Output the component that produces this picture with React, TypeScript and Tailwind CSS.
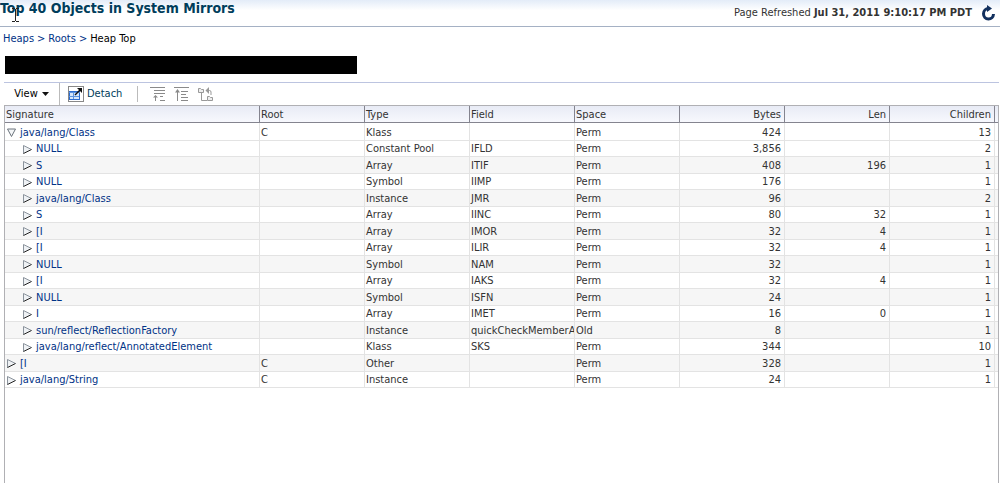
import React, { useState } from 'react';

type Row = {
  signature: string;
  depth: number;
  open?: boolean;
  root?: string;
  type: string;
  field?: string;
  space: string;
  bytes: string;
  len?: string;
  children: string;
};

const rows: Row[] = [
  { signature: 'java/lang/Class', depth: 0, open: true, root: 'C', type: 'Klass', space: 'Perm', bytes: '424', children: '13' },
  { signature: 'NULL', depth: 1, type: 'Constant Pool', field: 'IFLD', space: 'Perm', bytes: '3,856', children: '2' },
  { signature: 'S', depth: 1, type: 'Array', field: 'ITIF', space: 'Perm', bytes: '408', len: '196', children: '1' },
  { signature: 'NULL', depth: 1, type: 'Symbol', field: 'IIMP', space: 'Perm', bytes: '176', children: '1' },
  { signature: 'java/lang/Class', depth: 1, type: 'Instance', field: 'JMR', space: 'Perm', bytes: '96', children: '2' },
  { signature: 'S', depth: 1, type: 'Array', field: 'IINC', space: 'Perm', bytes: '80', len: '32', children: '1' },
  { signature: '[I', depth: 1, type: 'Array', field: 'IMOR', space: 'Perm', bytes: '32', len: '4', children: '1' },
  { signature: '[I', depth: 1, type: 'Array', field: 'ILIR', space: 'Perm', bytes: '32', len: '4', children: '1' },
  { signature: 'NULL', depth: 1, type: 'Symbol', field: 'NAM', space: 'Perm', bytes: '32', children: '1' },
  { signature: '[I', depth: 1, type: 'Array', field: 'IAKS', space: 'Perm', bytes: '32', len: '4', children: '1' },
  { signature: 'NULL', depth: 1, type: 'Symbol', field: 'ISFN', space: 'Perm', bytes: '24', children: '1' },
  { signature: 'I', depth: 1, type: 'Array', field: 'IMET', space: 'Perm', bytes: '16', len: '0', children: '1' },
  { signature: 'sun/reflect/ReflectionFactory', depth: 1, type: 'Instance', field: 'quickCheckMemberAc', space: 'Old', bytes: '8', children: '1' },
  { signature: 'java/lang/reflect/AnnotatedElement', depth: 1, type: 'Klass', field: 'SKS', space: 'Perm', bytes: '344', children: '10' },
  { signature: '[I', depth: 0, root: 'C', type: 'Other', space: 'Perm', bytes: '328', children: '1' },
  { signature: 'java/lang/String', depth: 0, root: 'C', type: 'Instance', space: 'Perm', bytes: '24', children: '1' },
];

const columns = [
  { label: 'Signature' },
  { label: 'Root' },
  { label: 'Type' },
  { label: 'Field' },
  { label: 'Space' },
  { label: 'Bytes', right: true },
  { label: 'Len', right: true },
  { label: 'Children', right: true },
];

const Triangle = ({ open }: { open: boolean }) =>
  open ? (
    <svg width="9" height="9" viewBox="0 0 9 9" fill="#f4f6f8">
      <path d="M.5 1h8L4.500 8.500z" stroke="#6b737c" />
    </svg>
  ) : (
    <svg width="9" height="9" viewBox="0 0 9 9" fill="#eef1f4">
      <path d="M.5 8.500V.5L8.500 4.500" stroke="#8b939c" />
      <path d="M.5 8.500L8.500 4.500" stroke="#222" />
    </svg>
  );

const DetachIcon = () => (
  <svg width="16" height="16" viewBox="0 0 16 16">
    <rect x=".5" y=".5" width="15" height="15" fill="none" stroke="#111" strokeDasharray="1 1" />
    <rect x="1.500" y="5.500" width="10" height="8" fill="#d6e6fb" stroke="#2b6bd0" />
    <path d="M1 6.500h11M5.500 7v6M1 10.500h10" stroke="#5c93e0" />
    <path d="M7 9l6-6" stroke="#111" strokeWidth="1.500" />
    <path d="M9 2h5v5z" fill="#111" />
  </svg>
);

const GoUpIcon = () => (
  <svg width="15" height="15" viewBox="0 0 15 15" fill="none" stroke="#8a8a8a">
    <path d="M0 .5h15M4 3.500h11M4 6.500h11M10 9.500h3M10 13.500h5M5.500 14V9" />
    <path d="M3 10.500h5L5.500 8z" fill="#8a8a8a" stroke="none" />
  </svg>
);

const GoTopIcon = () => (
  <svg width="15" height="15" viewBox="0 0 15 15" fill="none" stroke="#8a8a8a">
    <path d="M0 .5h15M7 4.500h7M7 7.500h5M7 10.500h7M7 13.500h7M3.500 14V4" />
    <path d="M1 5.500h5L3.500 2z" fill="#8a8a8a" stroke="none" />
  </svg>
);

const ShowAsTopIcon = () => (
  <svg width="15" height="15" viewBox="0 0 15 15" fill="none" stroke="#999">
    <path d="M.5 1.500h2l1 1h2v3h-5zM9.500 9.500h2l1 1h2v3h-5z" fill="#eee" />
    <path d="M3.500 6v7.500H9M8 3.500h3.500q1.500 0 1.500 1.500v3" />
    <path d="M11 0v7L7.500 3.500z" fill="#999" stroke="none" />
  </svg>
);

const App: React.FC = () => {
  const [selected, setSelected] = useState<number | null>(null);

  return (
    <div className="min-h-screen flex flex-col bg-white text-[#333] text-[11px] leading-[16px] font-['DejaVu_Sans_Condensed','DejaVu_Sans',sans-serif]">
      {/* Page header */}
      <header className="relative mr-1 h-[27px] flex items-start justify-between border-b border-[#a5b1c4] bg-linear-to-b from-[#e3ecf8] to-white to-40%">
        <h1 className="text-[14px] font-bold text-[#003d5b]">Top 40 Objects in System Mirrors</h1>
        <div className="flex items-center gap-2 pt-[5px] pr-1">
          <p>
            Page Refreshed <b>Jul 31, 2011 9:10:17 PM PDT</b>
          </p>
          <button aria-label="Refresh">
            <svg width="16" height="16" viewBox="0 0 16 16" fill="none" stroke="#12305e" strokeWidth="3">
              <path d="M8.500 3.500A5 5.250 0 1 0 13.500 9" />
              <path d="M7 0l5 3.500L7 7z" fill="#12305e" stroke="none" />
            </svg>
          </button>
        </div>
        {/* Text cursor */}
        <svg className="absolute left-3 top-2" width="7" height="14" viewBox="0 0 7 14" stroke="#222" fill="none">
          <path d="M0 .5h3M4 .5h3M3.500 1v12M0 13.500h3M4 13.500h3" />
        </svg>
      </header>

      <nav aria-label="Breadcrumb" className="flex gap-[3px] pl-[3px] pt-1 text-[#003286]">
        <a href="#heaps">Heaps</a>
        <span>&gt;</span>
        <a href="#roots">Roots</a>
        <span>&gt;</span>
        <span className="text-black">Heap Top</span>
      </nav>

      <div className="ml-[5px] mt-[9px] h-[18px] w-[352px] bg-black" />

      <main className="ml-1 mr-[5px] mt-2 flex-1 flex flex-col">
        {/* Toolbar */}
        <div className="flex h-[23px] items-center border-t border-[#bcc4e0]">
          <button className="flex h-full w-14 items-center justify-center gap-1 border-r border-[#bbb] text-black">
            View
            <svg width="7" height="4" viewBox="0 0 7 4">
              <path d="M0 0h7L3.500 4z" fill="#111" />
            </svg>
          </button>
          <button className="ml-2 flex items-center gap-[3px] text-[#003d5b]">
            <DetachIcon />
            Detach
          </button>
          <span className="mr-3 ml-[15px] h-4 border-l border-[#bbb]" />
          <div className="flex gap-[9px]">
            <button aria-label="Go Up"><GoUpIcon /></button>
            <button aria-label="Go To Top"><GoTopIcon /></button>
            <button aria-label="Show as Top"><ShowAsTopIcon /></button>
          </div>
        </div>

        {/* Object tree */}
        <div className="flex-1 border border-b-0 border-[#b0b0b4]">
          <table className="w-full table-fixed border-separate border-spacing-0 leading-[15px]">
            <thead>
              <tr className="h-[17px] bg-linear-to-b from-[#e8ebf5] to-[#f8f9fe]">
                {columns.map((c, i) => (
                  <th
                    key={c.label}
                    scope="col"
                    className={`border-r border-b border-[#84848f] p-0 pt-px font-normal ${i === 0 ? '' : 'w-[105px]'} ${
                      c.right ? 'pr-[3px] text-right' : 'pl-px text-left'
                    }`}
                  >
                    {c.label}
                  </th>
                ))}
                <td className="w-[3px] border-b border-[#84848f]" />
              </tr>
            </thead>
            <tbody className="[&_td]:border-b [&_td]:border-[#e3e3e3] [&_td]:px-0 [&_td]:pb-0">
              {rows.map((row, i) => (
                <tr
                  key={i}
                  onClick={() => setSelected(i)}
                  className={`${i === 0 ? 'h-[18px] [&>td]:pt-[2px]' : i % 2 ? 'h-4 leading-[14px] [&>td]:pt-px' : 'h-[17px] [&>td]:pt-0'} ${
                    selected === i ? 'bg-[#dde8f7]' : i > 0 && i % 2 === 0 ? 'bg-[#f6f6f6]' : ''
                  }`}
                >
                  <td className="border-r">
                    <div className={`flex items-center gap-1 ${row.depth ? 'pl-[18px]' : 'pl-[2px]'}`}>
                      <button aria-label={row.open ? 'Collapse' : 'Expand'}>
                        <Triangle open={!!row.open} />
                      </button>
                      <a href="#object" className="text-[#003286]">{row.signature}</a>
                    </div>
                  </td>
                  <td className="border-r"><div className="pl-px">{row.root}</div></td>
                  <td className="border-r"><div className="pl-px">{row.type}</div></td>
                  <td className="border-r"><div className="overflow-hidden pl-px whitespace-nowrap">{row.field}</div></td>
                  <td className="border-r"><div className="pl-px">{row.space}</div></td>
                  <td className="border-r text-right"><div className="pr-[3px]">{row.bytes}</div></td>
                  <td className="border-r text-right"><div className="pr-[3px]">{row.len}</div></td>
                  <td className="border-r text-right"><div className="pr-[3px]">{row.children}</div></td>
                  <td />
                </tr>
              ))}
            </tbody>
          </table>
        </div>
      </main>
    </div>
  );
};

export default App;
